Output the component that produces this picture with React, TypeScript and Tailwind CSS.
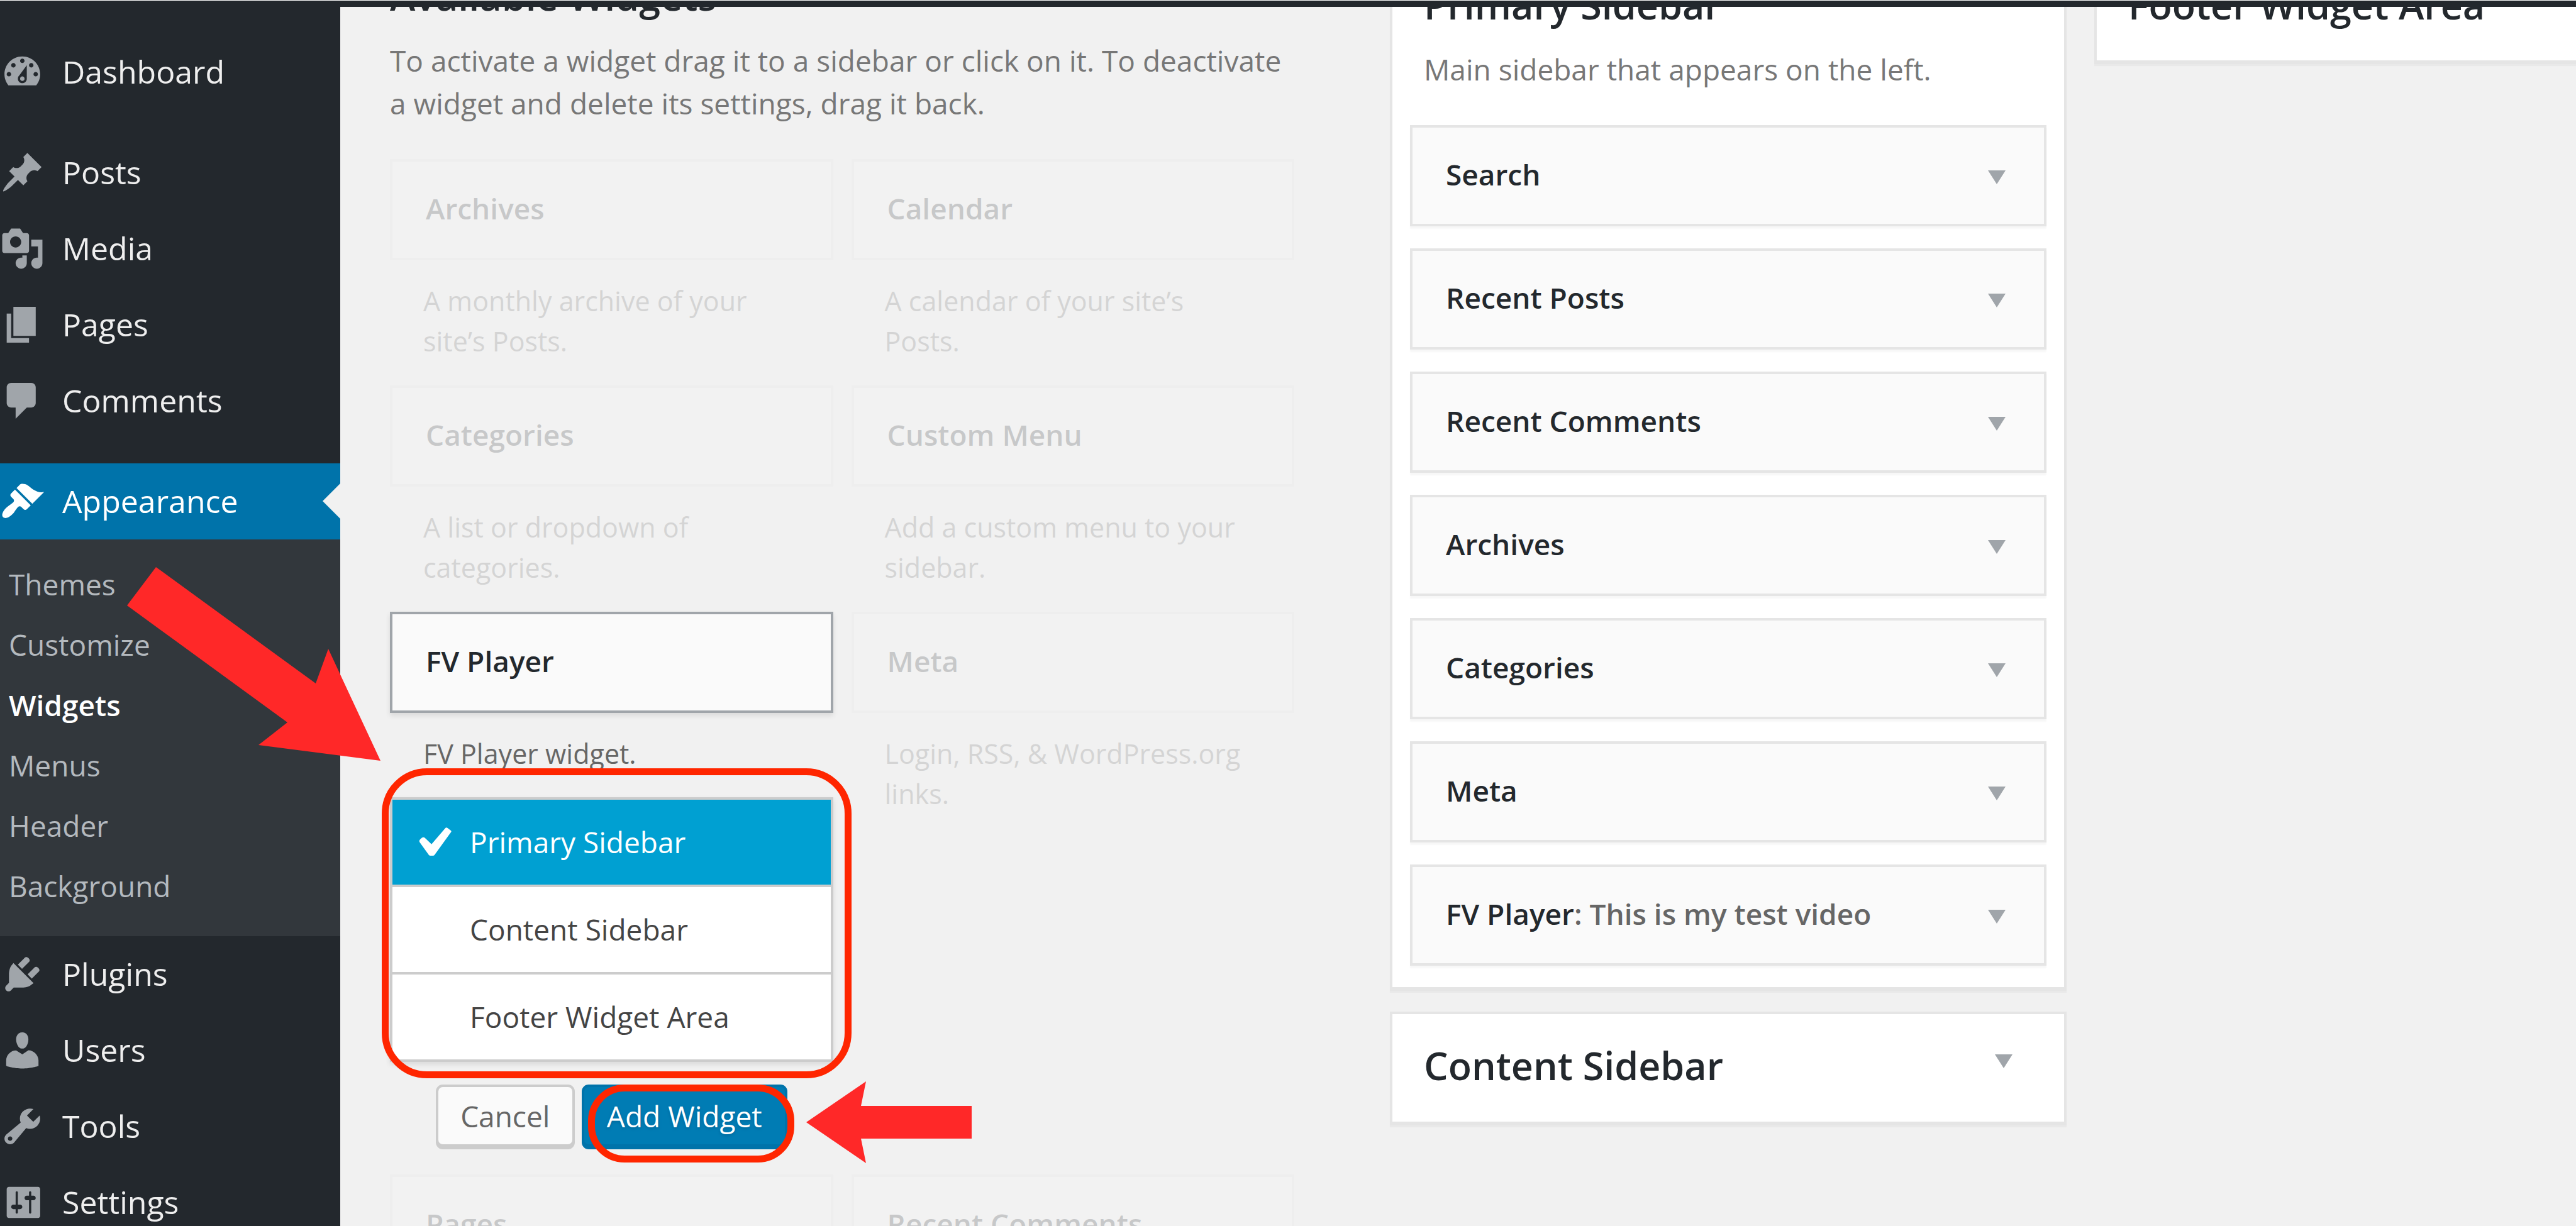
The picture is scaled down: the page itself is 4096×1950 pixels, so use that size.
import type { ReactNode } from "react";

const ICONS = {
  dashboard:
    "M3.76 16h12.48c1.1-1.37 1.76-3.11 1.76-5 0-4.42-3.58-8-8-8s-8 3.58-8 8c0 1.89.66 3.63 1.76 5zM10 4c.55 0 1 .45 1 1s-.45 1-1 1-1-.45-1-1 .45-1 1-1zM6 6c.55 0 1 .45 1 1s-.45 1-1 1-1-.45-1-1 .45-1 1-1zm8 0c.55 0 1 .45 1 1s-.45 1-1 1-1-.45-1-1 .45-1 1-1zm-5.37 5.55L12 7v6c0 1.1-.9 2-2 2s-2-.9-2-2c0-.57.24-1.08.63-1.45zM4 10c.55 0 1 .45 1 1s-.45 1-1 1-1-.45-1-1 .45-1 1-1zm12 0c.55 0 1 .45 1 1s-.45 1-1 1-1-.45-1-1 .45-1 1-1zm-5 3c0-.55-.45-1-1-1s-1 .45-1 1 .45 1 1 1 1-.45 1-1z",
  posts:
    "M10.44 3.02l1.82-1.82 6.36 6.35-1.83 1.82c-1.05-.68-2.48-.57-3.41.36l-.75.75c-.92.93-1.04 2.35-.35 3.41l-1.83 1.82-2.41-2.41-2.8 2.79c-.42.42-3.38 2.71-3.8 2.29s1.86-3.39 2.28-3.81l2.79-2.79L4.1 9.36l1.83-1.82c1.05.69 2.48.57 3.4-.36l.75-.75c.93-.92 1.05-2.35.36-3.41z",
  media:
    "M13 11V4c0-.55-.45-1-1-1h-1.67L9 1H5L3.67 3H2c-.55 0-1 .45-1 1v7c0 .55.45 1 1 1h10c.55 0 1-.45 1-1zM7 4.5c1.38 0 2.5 1.12 2.5 2.5S8.38 9.5 7 9.5 4.5 8.38 4.5 7 5.62 4.5 7 4.5zM14 6h5v10.5c0 1.38-1.12 2.5-2.5 2.5S14 17.88 14 16.5s1.12-2.5 2.5-2.5c.17 0 .34.02.5.05V9h-3V6zm-4 8.05V13h2v3.5c0 1.38-1.12 2.5-2.5 2.5S7 17.88 7 16.5 8.12 14 9.5 14c.17 0 .34.02.5.05z",
  pages: "M6 15V2h10v13H6zm-1 1h8v2H3V5h2v11z",
  comments:
    "M5 2h9c1.1 0 2 .9 2 2v7c0 1.1-.9 2-2 2h-2l-5 5v-5H5c-1.1 0-2-.9-2-2V4c0-1.1.9-2 2-2z",
  appearance:
    "M14.48 11.06L7.41 3.99l1.5-1.5c.5-.56 2.3-.47 3.51.32 1.21.8 1.43 1.28 2.91 2.1 1.18.64 2.45 1.26 4.45.85zm-.71.71L6.7 4.7 4.93 6.47c-.39.39-.39 1.02 0 1.41l1.06 1.06c.39.39.39 1.03 0 1.42-.6.6-1.43 1.11-2.21 1.69-.35.26-.7.53-1.01.84C1.43 14.23.4 16.08 1.4 17.07c.99 1 2.84-.03 4.18-1.36.31-.31.58-.66.85-1.02.57-.78 1.08-1.61 1.69-2.21.39-.39 1.02-.39 1.41 0l1.06 1.06c.39.39 1.02.39 1.41 0z",
  plugins:
    "M13.11 4.36L9.87 7.6 8 5.73l3.24-3.24c.35-.34 1.05-.2 1.56.32.52.51.66 1.21.31 1.55zm-8 1.77l.91-1.12 9.01 9.01-1.19.84c-.71.71-2.63 1.16-3.82 1.16H6.14L4.9 17.26c-.59.59-1.54.59-2.12 0-.59-.58-.59-1.53 0-2.12l1.24-1.24v-3.88c0-1.13.4-3.19 1.09-3.89zm7.26 3.97l3.24-3.24c.34-.35 1.04-.21 1.55.31.52.51.66 1.21.31 1.55l-3.24 3.25z",
  users:
    "M10 9.25c-2.27 0-2.73-3.44-2.73-3.44C7 4.02 7.82 2 9.97 2c2.16 0 2.98 2.02 2.71 3.81 0 0-.41 3.44-2.68 3.44zm0 2.57L12.72 10c2.39 0 4.52 2.33 4.52 4.53v2.49s-3.65 1.13-7.24 1.13c-3.65 0-7.24-1.13-7.24-1.13v-2.49c0-2.25 1.94-4.48 4.47-4.48z",
  tools:
    "M16.68 9.77c-1.34 1.34-3.3 1.67-4.95.99l-5.41 6.52c-.99.99-2.59.99-3.58 0s-.99-2.59 0-3.57l6.52-5.42c-.68-1.65-.35-3.61.99-4.95 1.28-1.28 3.12-1.62 4.72-1.06l-2.89 2.89 2.82 2.82 2.86-2.87c.53 1.58.18 3.39-1.08 4.65zM3.81 16.21c.4.39 1.04.39 1.43 0 .4-.4.4-1.04 0-1.43-.39-.4-1.03-.4-1.43 0-.39.39-.39 1.03 0 1.43z",
  settings:
    "M18 16V4c0-.55-.45-1-1-1H4c-.55 0-1 .45-1 1v12c0 .55.45 1 1 1h13c.55 0 1-.45 1-1zM8 11h1c.55 0 1 .45 1 1s-.45 1-1 1H8v1.5c0 .28-.22.5-.5.5s-.5-.22-.5-.5V13H6c-.55 0-1-.45-1-1s.45-1 1-1h1V5.5c0-.28.22-.5.5-.5s.5.22.5.5V11zm5-2h-1c-.55 0-1-.45-1-1s.45-1 1-1h1V5.5c0-.28.22-.5.5-.5s.5.22.5.5V7h1c.55 0 1 .45 1 1s-.45 1-1 1h-1v5.5c0 .28-.22.5-.5.5s-.5-.22-.5-.5V9z",
  check:
    "M14.9 4.9l1.2.9q.3.2.1.5l-5.7 7.9q-.2.2-.5.2H9.100q-.3 0-.5-.2L5.500 9.900q-.4-.6.1-1.100l.6-.5q.6-.4 1.100.1l2.200 2.100 4.700-5.500q.3-.4.7-.1z",
};

type IconName = keyof typeof ICONS;

function Icon({ name, className }: { name: IconName; className: string }) {
  return (
    <svg viewBox="0 0 20 20" className={className} fill="currentColor" fillRule="evenodd" aria-hidden="true">
      <path d={ICONS[name]} />
    </svg>
  );
}

function MenuItem({ icon, label, current = false }: { icon: IconName; label: string; current?: boolean }) {
  return (
    <a
      href="#"
      className={
        current
          ? "relative flex h-[121px] items-center gap-7 bg-[#0073aa] text-[50px] text-white"
          : "flex h-[121px] items-center gap-7 text-[50px] text-[#eeeeee]"
      }
    >
      <Icon name={icon} className={current ? "h-[71px] w-[71px]" : "h-[71px] w-[71px] text-[#a0a5aa]"} />
      {label}
      {current && (
        <svg viewBox="0 0 28 56" className="absolute right-0 top-8 h-14 w-7" aria-hidden="true">
          <path d="M28 0v56L0 28z" fill="#f1f1f1" />
        </svg>
      )}
    </a>
  );
}

const SUBMENU = ["Themes", "Customize", "Widgets", "Menus", "Header", "Background"];

function AdminMenu() {
  return (
    <nav aria-label="Main menu" className="w-[541px] shrink-0 bg-[#23282d] pt-[43px]">
      <MenuItem icon="dashboard" label="Dashboard" />
      <div className="mt-[39px]">
        <MenuItem icon="posts" label="Posts" />
        <MenuItem icon="media" label="Media" />
        <MenuItem icon="pages" label="Pages" />
        <MenuItem icon="comments" label="Comments" />
      </div>
      <div className="mt-[39px]">
        <MenuItem icon="appearance" label="Appearance" current />
        <ul className="bg-[#32373c] pt-[23px] pb-8 pl-3.5">
          {SUBMENU.map((label) => (
            <li key={label}>
              <a
                href="#"
                className={
                  label === "Widgets"
                    ? "block text-[46px] leading-[96px] font-semibold text-white"
                    : "block text-[46px] leading-[96px] text-[#b4b9be]"
                }
              >
                {label}
              </a>
            </li>
          ))}
        </ul>
        <MenuItem icon="plugins" label="Plugins" />
        <MenuItem icon="users" label="Users" />
        <MenuItem icon="tools" label="Tools" />
        <MenuItem icon="settings" label="Settings" />
      </div>
    </nav>
  );
}

function AvailableWidget({
  title,
  description,
  active = false,
  children,
}: {
  title: string;
  description: string;
  active?: boolean;
  children?: ReactNode;
}) {
  return (
    <div className={active ? "pb-10" : "pb-[38px] opacity-20"}>
      <h3
        className={
          active
            ? "border-4 border-[#a0a5aa] bg-[#fafafa] px-[53px] pt-11 pb-[49px] text-[46px] leading-[60px] font-semibold shadow-[0_4px_8px_rgba(0,0,0,0.1)]"
            : "border-4 border-[#e5e5e5] bg-[#fafafa] px-[53px] pt-11 pb-[49px] text-[46px] leading-[60px] font-semibold"
        }
      >
        {title}
      </h3>
      <p className="mt-[33px] px-[53px] text-[43px] leading-[64px] text-[#666666]">{description}</p>
      {children}
    </div>
  );
}

const AREAS = ["Primary Sidebar", "Content Sidebar", "Footer Widget Area"];

function WidgetChooser() {
  return (
    <>
      <div className="relative mt-[37px]">
        <ul className="divide-y-4 divide-[#cccccc] border-4 border-[#cccccc] bg-white shadow-[0_4px_8px_rgba(0,0,0,0.1)]">
          {AREAS.map((area, i) => (
            <li key={area}>
              <button
                type="button"
                className={
                  i === 0
                    ? "relative block w-full bg-[#00a0d2] pl-[123px] text-left text-[46px] leading-[135px] text-white"
                    : "block w-full pl-[123px] text-left text-[46px] leading-[135px] text-[#444444]"
                }
              >
                {i === 0 && <Icon name="check" className="absolute top-[22px] left-[18px] h-[93px] w-[93px]" />}
                {area}
              </button>
            </li>
          ))}
        </ul>
        <div className="absolute -top-[46px] -right-[29px] -bottom-[26px] -left-[13px] rounded-[72px] border-[11px] border-[#ff2600]" />
      </div>
      <div className="mt-9 flex h-[103px] justify-center gap-[11px]">
        <button
          type="button"
          className="mb-1 w-[221px] rounded-[11px] border-4 border-[#cccccc] bg-[#fafafa] text-[46px] leading-[60px] text-[#666666] shadow-[0_4px_0_#cccccc]"
        >
          Cancel
        </button>
        <div className="relative">
          <button
            type="button"
            className="h-[99px] w-[327px] rounded-[11px] border-4 border-[#0073aa] bg-[#007cb4] text-[46px] leading-[60px] text-white shadow-[0_4px_0_#0073aa] [text-shadow:0_2px_4px_#006799]"
          >
            Add Widget
          </button>
          <div className="absolute top-0 -right-[11px] -bottom-[21px] left-2.5 rounded-[58px] border-[11px] border-[#ff2600]" />
        </div>
      </div>
    </>
  );
}

function AvailableWidgets() {
  return (
    <section className="min-w-0 flex-[1438]">
      <h2 className="-mt-[57px] text-[61px] leading-20 font-semibold">Available Widgets</h2>
      <p className="mt-7 text-[46px] leading-[68px] text-[#777777]">
        To activate a widget drag it to a sidebar or click on it. To deactivate a widget and delete its settings, drag
        it back.
      </p>
      <div className="mt-[55px] grid grid-cols-2 gap-x-[29px]">
        <AvailableWidget title="Archives" description="A monthly archive of your site’s Posts." />
        <AvailableWidget title="Calendar" description="A calendar of your site’s Posts." />
        <AvailableWidget title="Categories" description="A list or dropdown of categories." />
        <AvailableWidget title="Custom Menu" description="Add a custom menu to your sidebar." />
        <AvailableWidget title="FV Player" description="FV Player widget." active>
          <WidgetChooser />
        </AvailableWidget>
        <AvailableWidget title="Meta" description="Login, RSS, & WordPress.org links." />
        <AvailableWidget title="Pages" description="A list of your site’s Pages." />
        <AvailableWidget title="Recent Comments" description="Your site’s most recent comments." />
      </div>
    </section>
  );
}

function Caret({ className }: { className: string }) {
  return (
    <svg viewBox="0 0 28 22" className={className} fill="#a0a5aa" aria-hidden="true">
      <path d="M0 0h28L14 22z" />
    </svg>
  );
}

const PLACED = ["Search", "Recent Posts", "Recent Comments", "Archives", "Categories", "Meta"];

function PlacedWidget({ title, note }: { title: string; note?: string }) {
  return (
    <li>
      <button
        type="button"
        className="flex w-full items-end justify-between border-4 border-[#e5e5e5] bg-[#fafafa] pt-11 pr-[61px] pb-[49px] pl-[53px] text-[46px] leading-[60px] font-semibold shadow-[0_4px_2px_rgba(0,0,0,0.03)]"
      >
        <span>
          {title}
          {note && <span className="text-[#666666]">: {note}</span>}
        </span>
        <Caret className="mb-3.5 h-[22px] w-7 shrink-0" />
      </button>
    </li>
  );
}

function SidebarAreas() {
  return (
    <div className="grid min-w-0 flex-[1886] grid-cols-[1076fr_766fr] items-start gap-11">
      <div className="min-w-0">
        <section className="border-4 border-t-0 border-[#e5e5e5] bg-white px-7 pb-[34px] shadow-[0_2px_0_#e5e5e5,0_5px_1px_rgba(0,0,0,0.03)]">
          <h2 className="-mt-[43px] px-[22px] text-[61px] leading-20 font-semibold">Primary Sidebar</h2>
          <p className="mt-7 px-[22px] text-[46px] leading-[68px] text-[#777777]">
            Main sidebar that appears on the left.
          </p>
          <ul className="mt-[55px] flex flex-col gap-[35px]">
            {PLACED.map((title) => (
              <PlacedWidget key={title} title={title} />
            ))}
            <PlacedWidget title="FV Player" note="This is my test video" />
          </ul>
        </section>
        <section className="mt-[35px] border-4 border-[#e5e5e5] bg-white shadow-[0_2px_0_#e5e5e5,0_5px_1px_rgba(0,0,0,0.03)]">
          <button
            type="button"
            className="flex w-full items-start justify-between pt-[42px] pr-[82px] pb-[49px] pl-[50px] text-[61px] leading-20 font-semibold"
          >
            Content Sidebar
            <Caret className="mt-[22px] h-[22px] w-7 shrink-0" />
          </button>
        </section>
      </div>
      <section className="min-w-0 border-4 border-t-0 border-r-0 border-[#e5e5e5] bg-white px-[50px] pb-12 shadow-[0_2px_0_#e5e5e5,0_5px_1px_rgba(0,0,0,0.03)]">
        <h2 className="-mt-[43px] text-[61px] leading-20 font-semibold whitespace-nowrap">Footer Widget Area</h2>
      </section>
    </div>
  );
}

export default function App() {
  return (
    <div className="relative flex h-screen flex-col overflow-hidden bg-[#f1f1f1] font-['Open_Sans',sans-serif] text-[#23282d]">
      <header className="h-[11px] shrink-0 border-t border-white bg-[#23282d]" />
      <div className="flex min-h-0 flex-1 overflow-hidden">
        <AdminMenu />
        <main className="flex min-w-0 flex-1 gap-[152px] pl-[79px]">
          <AvailableWidgets />
          <SidebarAreas />
        </main>
      </div>
      <svg viewBox="0 0 403 308" className="absolute top-[902px] left-[202px] h-[308px] w-[403px]" aria-hidden="true">
        <path d="M46 0L0 61L255 247L209 283L403 308L320 130L300 185z" fill="#ff2828" />
      </svg>
      <svg viewBox="0 0 263 130" className="absolute top-[1720px] left-[1282px] h-[130px] w-[263px]" aria-hidden="true">
        <path d="M0 65L95 0L87 39H263V91H87L95 130z" fill="#ff2828" />
      </svg>
    </div>
  );
}
